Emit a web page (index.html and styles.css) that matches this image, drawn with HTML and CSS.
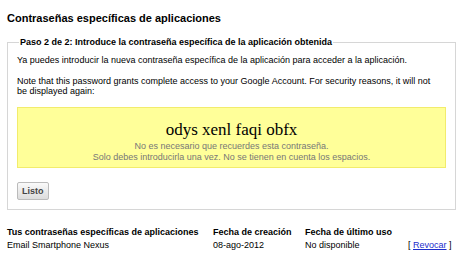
FILE: index.html
```html
<!DOCTYPE html>
<html lang="es">
<head>
  <meta charset="UTF-8">
  <title>Contraseñas específicas de aplicaciones</title>
  <link rel="stylesheet" href="styles.css">
</head>
<body>
  <!-- Título de la sección -->
  <h2 class="page-title">Contraseñas específicas de aplicaciones</h2>

  <!-- Paso 2: contraseña generada -->
  <fieldset class="step-box">
    <legend>Paso 2 de 2: Introduce la contraseña específica de la aplicación obtenida</legend>
    <p>Ya puedes introducir la nueva contraseña específica de la aplicación para acceder a la aplicación.</p>
    <p>Note that this password grants complete access to your Google Account. For security reasons, it will not be displayed again:</p>

    <div class="password-box">
      <div class="password">odys xenl faqi obfx</div>
      <div class="password-hint">No es necesario que recuerdes esta contraseña.</div>
      <div class="password-hint">Solo debes introducirla una vez. No se tienen en cuenta los espacios.</div>
    </div>

    <button class="done-btn">Listo</button>
  </fieldset>

  <!-- Lista de contraseñas -->
  <table class="app-list">
    <tr>
      <th class="col-name">Tus contraseñas específicas de aplicaciones</th>
      <th class="col-created">Fecha de creación</th>
      <th class="col-used">Fecha de último uso</th>
      <th></th>
    </tr>
    <tr>
      <td>Email Smartphone Nexus</td>
      <td>08-ago-2012</td>
      <td>No disponible</td>
      <td class="revoke">[ <a href="#">Revocar</a> ]</td>
    </tr>
  </table>
</body>
</html>
```

FILE: styles.css
```css
/* Página */
body {
  font-family: "Liberation Sans", Arial, sans-serif;
  font-size: 9px;
  color: #000;
  margin: 0;
  padding: 0 14px 0 7px;
}

.page-title {
  font-size: 11px;
  margin: 0;
  padding: 12px 0 13px;
}

/* Recuadro del paso */
.step-box {
  border: 1px solid #d6d6d6;
  margin: 0;
  padding: 0 9px 9px;
}

.step-box legend {
  font-weight: bold;
  padding: 0 1px;
  margin-left: 2px;
}

.step-box p {
  margin: 8px 8px 11px 0;
}

/* Caja amarilla con la contraseña */
.password-box {
  background: #ffff99;
  border: 1px solid #f2ec6c;
  text-align: center;
  padding: 12px 0 4px;
  margin-bottom: 14px;
}

.password {
  font-family: "Liberation Serif", "Times New Roman", serif;
  font-size: 17px;
  line-height: 19px;
  margin-bottom: 2px;
}

.password-hint {
  color: #777;
  line-height: 11px;
}

/* Botón */
.done-btn {
  display: block;
  font-family: inherit;
  font-size: 9px;
  font-weight: bold;
  color: #444;
  background: linear-gradient(#fafafa, #dcdcdc);
  border: 1px solid #bbb;
  border-radius: 2px;
  padding: 3px 4px;
}

/* Tabla */
.app-list {
  margin-top: 14px;
  border-collapse: collapse;
  width: 100%;
}

.app-list th {
  text-align: left;
  padding: 3px 0 1px;
}

.app-list td {
  padding: 2px 0;
}

.col-name {
  width: 206px;
}

.col-created {
  width: 92px;
}

.col-used {
  width: 103px;
}

.app-list a {
  color: #1c2dcc;
}
```
